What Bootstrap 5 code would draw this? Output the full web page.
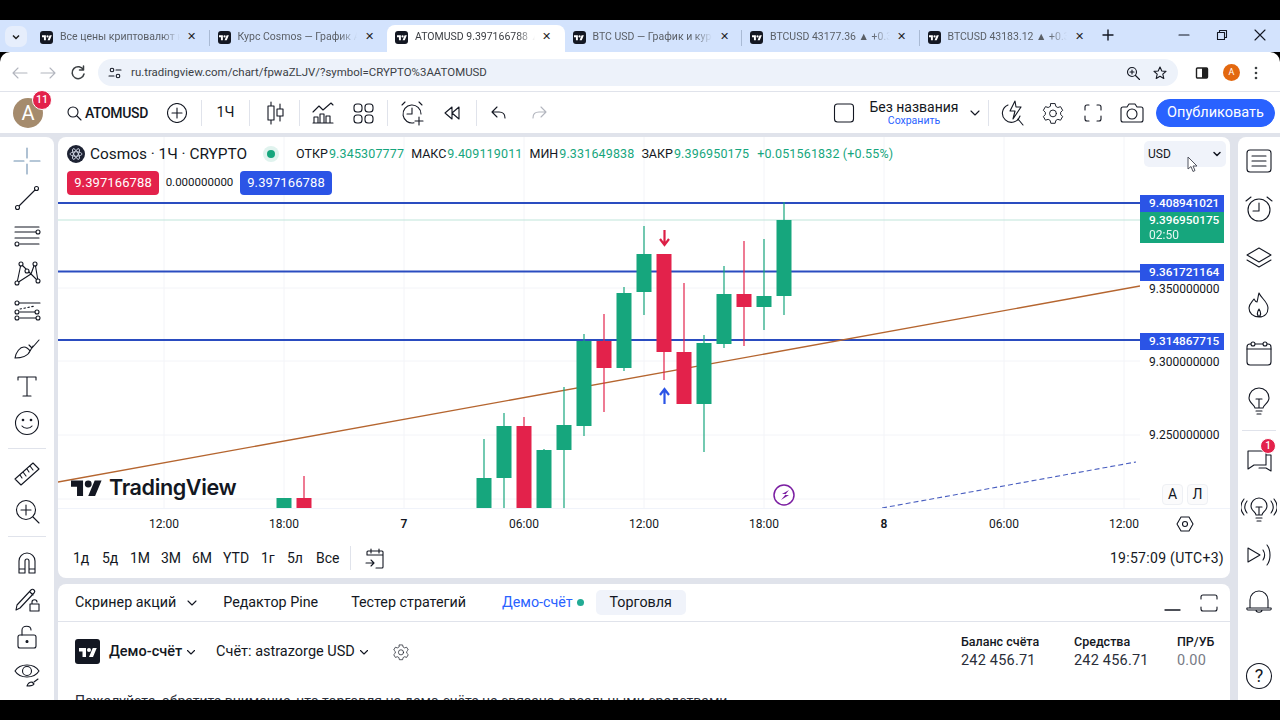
<!DOCTYPE html>
<html lang="ru">
<head>
<meta charset="UTF-8">
<title>ATOMUSD</title>
<link href="https://cdn.jsdelivr.net/npm/bootstrap@5.3.0/dist/css/bootstrap.min.css" rel="stylesheet">
<style>
html,body{height:720px;overflow:hidden}
body{background:#000;font-family:Roboto,"Liberation Sans",sans-serif;color:#131722;font-size:14px}
svg{display:block;flex:none}
.ic{fill:none;stroke:#131722;stroke-width:1.1;stroke-linecap:round;stroke-linejoin:round}
.ic-gray{stroke:#b2b5be}
.frame-top{height:20px}
.frame-bottom{height:20px;background:#000}

/* browser tabs */
.tabstrip{height:32px;background:#d3e3fd;padding-left:5px}
.tab-menu{width:22px;height:21px;margin:6px 5px 0 0;border-radius:7px;background:#e6eefc}
.br-tab{width:177.5px;height:27px;margin-top:5px;padding:0 8px 3px 8px;font-size:10.5px;color:#5a5f66;position:relative}
.br-tab.active{background:#fff;border-radius:8px 8px 0 0;color:#3a3d42}
.br-tab + .br-tab:not(.active):not(.after-active)::before{content:"";position:absolute;left:-1px;top:5px;height:16px;width:1px;background:#a9bad4}
.favicon{width:13px;height:13px;border-radius:3px;background:#131722;margin-right:7px}
.tab-title{flex:1;white-space:nowrap;overflow:hidden;-webkit-mask-image:linear-gradient(90deg,#000 85%,transparent);mask-image:linear-gradient(90deg,#000 85%,transparent)}
.tab-x{width:20px;text-align:center;font-size:10.5px;color:#1f1f1f;margin-left:2px}
.new-tab{margin:0 0 3px 4px}
.win-btns{gap:24px;padding:0 13px 3px 0}

/* address bar */
.addressbar{height:40px;background:#fff;border-bottom:1px solid #e0e3eb;border-radius:10px 10px 0 0;padding:2px 12px 0 10px}
.nav-fwd{margin-right:10px}
.addr-pill{width:1080px;height:27px;margin-left:10px;background:#edf2fa;border-radius:14px;padding:0 10px;font-size:11.45px;color:#3b3f46}
.addr-pill .host{margin-left:9px}
.addr-zoom{margin-right:11px}
.panel-btn{margin:0 13px 0 16px}
.chrome-avatar{width:17px;height:17px;border-radius:50%;background:#e3680f;color:#fff;font-size:9px;line-height:17px;text-align:center}

/* app */
.app{height:608px;background:#e0e3eb;display:flex;flex-direction:column}
.topbar{height:41px;background:#fff;margin-bottom:4px;padding:1px 5px 0 0}
.avatar-wrap{width:58px;padding-left:13px;position:relative}
.avatar{width:30px;height:30px;border-radius:50%;background:#a58b6d;color:#fff;font-size:20px;line-height:31px;text-align:center}
.count{position:absolute;background:#e3224b;color:#fff;border:1px solid #fff;border-radius:50%;text-align:center;font-weight:500}
.avatar-wrap .count{left:32px;top:-8px;width:20px;height:20px;font-size:10.5px;line-height:18px}
.tb-sym{width:134px;padding-left:8px;font-size:14px;font-weight:500}
.tb-sym span{margin:0 19px 0 3px;letter-spacing:-.35px}
.sep{width:1px;height:26px;background:#e0e3eb}
.sep-first{margin-left:9px}
.slot{width:40px;height:36px}
.slot-wide{width:47px;font-size:14.5px}
.slot-candle{margin:0 4.5px}
.slot-ind{margin-left:3px}
.slot-undo{margin-left:2px}
.slot-cam{width:38px}
.layout-name{width:100px;line-height:1.05;font-size:14px;margin-left:9px;text-align:center}
.layout-name small{display:block;color:#2962ff;font-size:10.5px;margin-top:1px}
.layout-chev{margin:0 7px 0 5px}
.btn-publish{--bs-btn-bg:#2962ff;--bs-btn-border-color:#2962ff;--bs-btn-padding-y:0;--bs-btn-padding-x:0;--bs-btn-font-size:14.5px;width:119px;height:28px;margin-left:5px}

.workspace{flex:1;min-height:0}
.leftbar{width:54px;background:#fff;border-radius:0 8px 0 0;padding-top:5px;margin-right:4px}
.leftbar .t{height:37.5px}
.hr-tool{width:38px;height:1px;background:#e0e3eb;margin:6px auto 6px}
.cross{stroke:#6d8fb0}
.center{width:1172px}
.rightbar{width:42px;margin-left:8px;background:#fff;border-radius:8px 0 0 0}
.rightbar .t{height:48px;position:relative}
.rightbar .t.short{height:46px}
.rightbar .hr-tool{width:34px;margin:5px auto 5px}
.rightbar .count{left:22px;top:2px;width:16px;height:16px;font-size:10px;line-height:14px}

/* chart pane */
.pane{height:441px;background:#fff;border-radius:8px;overflow:hidden;position:relative}
.plot-row{height:371px}
.plot{width:1082px;position:relative}
.legend{position:absolute;left:9px;top:8px;right:0}
.legend-title{font-size:15.4px;line-height:18px}
.cosmos{width:18px;height:18px;border-radius:50%;background:#1d2233;margin-right:5px}
.live{width:22px;height:18px;display:flex;align-items:center;justify-content:center;margin:0 14px 0 13px}
.live i{display:block;width:8px;height:8px;border-radius:50%;background:#16a67d;box-shadow:0 0 0 4px #e0f3ee}
.ohlc{font-size:12.5px;white-space:nowrap}
.ohlc b{font-weight:400;color:#16a67d;margin:0 7px 0 1px;letter-spacing:.15px}
.order-row{margin-top:7px;font-size:13px}
.order{height:24px;width:92px;color:#fff;border-radius:4px;text-align:center;line-height:24px;letter-spacing:.1px}
.order.sell{background:#e3224b}
.order.buy{background:#2b54e6}
.spread{width:81px;text-align:center;font-size:11.5px}
.logo{position:absolute;left:13px;top:338px;font-size:21.6px;font-weight:600;letter-spacing:-.4px;line-height:24px;font-family:Inter,Roboto,sans-serif}
.logo svg{margin-right:7px}
.price-axis{width:90px;position:relative;font-size:12px}
.tag{position:absolute;left:0;width:84px;height:17px;line-height:17px;padding-left:9px;color:#fff;background:#2b54e6;font-weight:500;font-size:11.8px}
.tag.last{background:#16a67d;height:31px;line-height:15px;padding-top:1px}
.tag.last small{display:block;font-size:12px;font-weight:400;opacity:.9}
.price{position:absolute;left:9px}
.currency{position:absolute;left:4px;top:4px;width:82px;height:26px;background:#f0f3fa;border-radius:5px;padding:0 4px;font-size:12px}
.cursor{position:absolute;left:47px;top:19px}
.ab{position:absolute;top:347px;width:21px;height:21px;background:#fbfbfc;border:1px solid #eef0f4;border-radius:4px;text-align:center;line-height:19px;font-size:14px}
.ab-a{left:22px}
.ab-l{left:47px}
.time-axis{height:30px;padding-left:46px;font-size:12px;border-top:1px solid #f0f3fa}
.time-axis span{width:120px;text-align:center}
.time-axis .day{font-weight:600}
.time-gear{margin-left:-9px}
.range-bar{height:40px;padding:0 6px 0 15px;font-size:14px}
.range-sep{width:1px;height:24px;background:#e0e3eb;margin:0 13px 0 11px}
.r1{width:29px}.r2{width:28px}.r3{width:31px}.r4{width:38px}.r5{width:26px}
.clock{font-size:14px;letter-spacing:.3px}

/* bottom panel */
.bottom{height:116px;margin-top:6px;background:#fff;border-radius:8px 8px 0 0;overflow:hidden}
.bottom-tabs{height:38px;padding:0 11px 0 17px;border-bottom:1px solid #e0e3eb;font-size:14.3px}
.bottom-tabs .chev{margin-left:10px}
.m-pine{margin-left:25px}
.m-tab{margin-left:33px}
.demo-link{color:#2962ff;margin-left:36px}
.dot{width:7px;height:7px;border-radius:50%;background:#22ab94;margin:0 12px 0 4px}
.trade-btn{height:25px;width:90px;background:#f0f3fa;border-radius:5px;text-align:center;line-height:25px}
.expand{margin-left:17px}
.account{padding:17px 0 0 17px;font-size:14.5px}
.account .acc-name{margin-left:20px}
.account .acc-gear{margin-left:23px}
.tv-square{width:25px;height:25px;background:#131722;border-radius:3px;margin-right:9px}
.metric{font-size:13px;line-height:18px;padding-top:11px}
.metric > div > div:first-child{font-weight:500;font-size:12.5px}
.metric .val{font-size:14.5px;letter-spacing:.2px;color:#2a2e39;margin-top:1px}
.metric .val.zero{color:#787b86}
.cut-line{padding:27px 0 0 17px;font-size:14px;white-space:nowrap;color:#2a2e39}
</style>
</head>
<body>
<svg width="0" height="0" class="position-absolute">
  <symbol id="tv" viewBox="0 0 36 24"><path fill="currentColor" d="M14 22H7V11H0V4h14zM28 22h-8l7.500-18h8z"/><circle fill="currentColor" cx="20" cy="8" r="4"/></symbol>
  <symbol id="gear" viewBox="0 0 28 28"><path d="M11.500 3h5l.8 3.300 2.300 1.300 3.200-1 2.500 4.300-2.400 2.300v2.600l2.400 2.300-2.500 4.300-3.200-1-2.300 1.300-.8 3.300h-5l-.8-3.300-2.300-1.300-3.200 1L2.700 18.100l2.400-2.300v-2.600L2.700 10.900l2.500-4.300 3.200 1 2.300-1.300z"/><circle cx="14" cy="14.500" r="4"/></symbol>
</svg>

<div class="frame-top"></div>

<div class="tabstrip d-flex">
  <div class="tab-menu d-flex align-items-center justify-content-center"><svg width="10" height="10" viewBox="0 0 10 10"><path d="M2 3.500l3 3 3-3" fill="none" stroke="#1f1f1f" stroke-width="1.500"/></svg></div>
  <div class="br-tab d-flex align-items-center"><div class="favicon d-flex align-items-center justify-content-center text-white"><svg width="10" height="7"><use href="#tv"/></svg></div><div class="tab-title">Все цены криптовалют на</div><div class="tab-x">✕</div></div>
  <div class="br-tab d-flex align-items-center"><div class="favicon d-flex align-items-center justify-content-center text-white"><svg width="10" height="7"><use href="#tv"/></svg></div><div class="tab-title">Курс Cosmos — График А</div><div class="tab-x">✕</div></div>
  <div class="br-tab active d-flex align-items-center"><div class="favicon d-flex align-items-center justify-content-center text-white"><svg width="10" height="7"><use href="#tv"/></svg></div><div class="tab-title">ATOMUSD 9.397166788 ▲</div><div class="tab-x">✕</div></div>
  <div class="br-tab after-active d-flex align-items-center"><div class="favicon d-flex align-items-center justify-content-center text-white"><svg width="10" height="7"><use href="#tv"/></svg></div><div class="tab-title">BTC USD — График и курс</div><div class="tab-x">✕</div></div>
  <div class="br-tab d-flex align-items-center"><div class="favicon d-flex align-items-center justify-content-center text-white"><svg width="10" height="7"><use href="#tv"/></svg></div><div class="tab-title">BTCUSD 43177.36 ▲ +0.31</div><div class="tab-x">✕</div></div>
  <div class="br-tab d-flex align-items-center"><div class="favicon d-flex align-items-center justify-content-center text-white"><svg width="10" height="7"><use href="#tv"/></svg></div><div class="tab-title">BTCUSD 43183.12 ▲ +0.32</div><div class="tab-x">✕</div></div>
  <div class="new-tab d-flex align-items-center"><svg width="14" height="14" class="ic"><path d="M7 2v10M2 7h10" stroke-width="1.400"/></svg></div>
  <div class="win-btns d-flex align-items-center ms-auto">
    <svg width="14" height="14" class="ic"><path d="M2 7h10"/></svg>
    <svg width="14" height="14" class="ic"><path d="M2.500 4.500h7v7h-7zM4.500 4.500v-2h7v7h-2"/></svg>
    <svg width="14" height="14" class="ic"><path d="M2 2l10 10M12 2L2 12"/></svg>
  </div>
</div>

<div class="addressbar d-flex align-items-center">
  <svg width="20" height="20" class="ic ic-gray me-2"><path d="M3 10h14M8 5l-5 5 5 5"/></svg>
  <svg width="20" height="20" class="ic ic-gray nav-fwd"><path d="M3 10h14M12 5l5 5-5 5"/></svg>
  <svg width="20" height="20" class="ic"><path d="M15.500 7a6 6 0 1 0 .5 4M15.500 3v4h-4" stroke-width="1.500" stroke="#3c4043"/></svg>
  <div class="addr-pill d-flex align-items-center">
    <svg width="14" height="14" class="ic"><circle cx="4" cy="4" r="1.800"/><path d="M8 4h5M1 10h5"/><circle cx="10" cy="10" r="1.800"/></svg>
    <span class="host">ru.tradingview.com/chart/fpwaZLJV/?symbol=CRYPTO%3AATOMUSD</span>
    <svg width="16" height="16" class="ic addr-zoom ms-auto"><circle cx="7" cy="7" r="4.500"/><path d="M10.500 10.500l4 4M5 7h4M7 5v4"/></svg>
    <svg width="16" height="16" class="ic"><path d="M8 2l1.800 4 4.200.4-3.200 2.800 1 4.300L8 11.200l-3.800 2.300 1-4.300L2 6.400 6.200 6z"/></svg>
  </div>
  <svg width="16" height="16" class="panel-btn" viewBox="0 0 16 16"><rect x="2.500" y="3" width="11" height="10" rx="1" fill="none" stroke="#1f1f1f" stroke-width="1.400"/><rect x="8" y="3" width="5.500" height="10" fill="#1f1f1f"/></svg>
  <div class="chrome-avatar">A</div>
  <svg width="16" height="16" class="ms-2"><circle cx="8" cy="3" r="1.300" fill="#3c4043"/><circle cx="8" cy="8" r="1.300" fill="#3c4043"/><circle cx="8" cy="13" r="1.300" fill="#3c4043"/></svg>
</div>

<div class="app">
  <div class="topbar d-flex align-items-center">
    <div class="avatar-wrap"><div class="avatar">A</div><div class="count">11</div></div>
    <div class="tb-sym d-flex align-items-center">
      <svg width="16" height="16" class="ic"><circle cx="7" cy="7" r="5"/><path d="M11 11l4 4"/></svg>
      <span>ATOMUSD</span>
      <svg width="20" height="20" class="ic"><circle cx="10" cy="10" r="9.500"/><path d="M10 5v10M5 10h10"/></svg>
    </div>
    <div class="sep sep-first"></div>
    <div class="slot-wide text-center">1Ч</div>
    <div class="sep"></div>
    <div class="slot slot-candle d-flex align-items-center justify-content-center"><svg width="22" height="24" class="ic"><path d="M7 1v4M7 19v4M16 3v5M16 15v5M4 5h6v14H4zM13 8h6v7h-6z"/></svg></div>
    <div class="sep"></div>
    <div class="slot slot-ind d-flex align-items-center justify-content-center"><svg width="24" height="24" class="ic"><path d="M2 11l6-6 4 4 8-7 2 2M3 22v-6h4v6M9 22v-9h4v9M15 22v-7h4v7M2 22h20"/></svg></div>
    <div class="slot d-flex align-items-center justify-content-center"><svg width="22" height="22" class="ic"><rect x="2" y="2" width="8" height="8" rx="3"/><rect x="13" y="2" width="8" height="8" rx="3"/><rect x="2" y="13" width="8" height="8" rx="3"/><rect x="13" y="13" width="8" height="8" rx="3"/></svg></div>
    <div class="sep ms-1"></div>
    <div class="slot d-flex align-items-center justify-content-center ms-1"><svg width="26" height="26" class="ic"><path d="M22 14a9 9 0 1 0-7 8.800M13 8v6H8M3 5l3-3M23 5l-3-3M20 17v8M16 21h8"/></svg></div>
    <div class="slot d-flex align-items-center justify-content-center"><svg width="20" height="20" class="ic"><path d="M10 4l-7 6 7 6zM17 4l-7 6 7 6z"/></svg></div>
    <div class="sep ms-1"></div>
    <div class="slot slot-undo d-flex align-items-center justify-content-center"><svg width="20" height="20" class="ic"><path d="M8 4L3 9l5 5M3 9h7c4 0 6 2 6 6"/></svg></div>
    <div class="slot d-flex align-items-center justify-content-center"><svg width="20" height="20" class="ic ic-gray"><path d="M12 4l5 5-5 5M17 9h-7c-4 0-6 2-6 6"/></svg></div>

    <div class="ms-auto d-flex align-items-center">
      <svg width="22" height="22" class="ic"><rect x="1.500" y="2" width="19" height="18" rx="3"/></svg>
      <div class="layout-name">Без названия<small>Сохранить</small></div>
      <svg width="12" height="12" class="ic layout-chev"><path d="M2 4l4 4 4-4"/></svg>
      <div class="sep"></div>
      <div class="slot d-flex align-items-center justify-content-center ms-1"><svg width="24" height="26" class="ic"><path d="M7 5a9 9 0 1 0 12 11M14 1l-5 10h5l-2 8 8-12h-5zM17 19l5 6"/></svg></div>
      <div class="slot d-flex align-items-center justify-content-center"><svg width="24" height="24" viewBox="0 0 28 28" class="ic"><use href="#gear"/></svg></div>
      <div class="slot d-flex align-items-center justify-content-center"><svg width="20" height="20" class="ic"><path d="M2 7V4a2 2 0 0 1 2-2h2M14 2h2a2 2 0 0 1 2 2v3M18 13v3a2 2 0 0 1-2 2h-2M6 18H4a2 2 0 0 1-2-2v-3"/></svg></div>
      <div class="slot slot-cam d-flex align-items-center justify-content-center"><svg width="24" height="22" class="ic"><path d="M3 5h4l2-3h6l2 3h4a2 2 0 0 1 2 2v11a2 2 0 0 1-2 2H3a2 2 0 0 1-2-2V7a2 2 0 0 1 2-2z"/><circle cx="12" cy="12" r="5"/></svg></div>
      <button class="btn btn-primary btn-publish rounded-pill">Опубликовать</button>
    </div>
  </div>

  <div class="workspace d-flex">
    <div class="leftbar">
      <div class="t d-flex align-items-center justify-content-center"><svg width="28" height="28" class="ic cross"><path d="M14 1v10M14 17v10M1 14h10M17 14h10"/></svg></div>
      <div class="t d-flex align-items-center justify-content-center"><svg width="28" height="28" class="ic"><path d="M6 22L22 6"/><circle cx="4.500" cy="23.500" r="2" fill="#fff"/><circle cx="23.500" cy="4.500" r="2" fill="#fff"/></svg></div>
      <div class="t d-flex align-items-center justify-content-center"><svg width="28" height="28" class="ic"><path d="M2 5h24M2 10h21M2 16h24M7 22h19"/><circle cx="25" cy="10" r="2" fill="#fff"/><circle cx="4" cy="22" r="2" fill="#fff"/></svg></div>
      <div class="t d-flex align-items-center justify-content-center"><svg width="28" height="28" class="ic"><path d="M4 24L8 5l10 10L22 4l3 18-7-7-10-10zM4 24l14-9"/><circle cx="4" cy="24" r="2" fill="#fff"/><circle cx="8" cy="5" r="2" fill="#fff"/><circle cx="14" cy="12" r="2" fill="#fff"/><circle cx="22" cy="5" r="2" fill="#fff"/><circle cx="25" cy="22" r="2" fill="#fff"/></svg></div>
      <div class="t d-flex align-items-center justify-content-center"><svg width="28" height="28" class="ic"><path d="M6 6h21M7 15h15M7 21h16"/><path d="M7 12l15-3" stroke-dasharray="1.500 2.500"/><circle cx="4" cy="6" r="2" fill="#fff"/><circle cx="4" cy="15" r="2" fill="#fff"/><circle cx="4" cy="21" r="2" fill="#fff"/><circle cx="24" cy="15" r="2" fill="#fff"/><circle cx="25" cy="21" r="2" fill="#fff"/></svg></div>
      <div class="t d-flex align-items-center justify-content-center"><svg width="28" height="28" class="ic"><path d="M2 24c1-6 5-11 9-11 2 0 5 2 6 4-2 5-9 7-15 7zM17 17l3-5M16 11l3 3 7-8"/></svg></div>
      <div class="t d-flex align-items-center justify-content-center"><svg width="28" height="28" class="ic"><path d="M5 8V5h18v3M14 5v19M10 24h8"/></svg></div>
      <div class="t d-flex align-items-center justify-content-center"><svg width="28" height="28" class="ic"><circle cx="14" cy="14" r="11.500"/><path d="M9 17c2 3 8 3 10 0"/><circle cx="10" cy="11" r=".8" fill="#131722"/><circle cx="18" cy="11" r=".8" fill="#131722"/></svg></div>
      <div class="hr-tool"></div>
      <div class="t d-flex align-items-center justify-content-center"><svg width="28" height="28" class="ic"><path d="M2 19L20 3l6 6L8 25zM7 15l2 3M10 12l3 4M14 9l2 3M17 6l3 4"/></svg></div>
      <div class="t d-flex align-items-center justify-content-center"><svg width="28" height="28" class="ic"><circle cx="13" cy="13" r="9.500"/><path d="M13 8v10M8 13h10M20 20l6 6"/></svg></div>
      <div class="hr-tool"></div>
      <div class="t d-flex align-items-center justify-content-center"><svg width="28" height="28" class="ic"><path d="M6 25V13a8 8 0 0 1 16 0v12h-6V13a2 2 0 0 0-4 0v12zM6 21h6M16 21h6"/></svg></div>
      <div class="t d-flex align-items-center justify-content-center"><svg width="28" height="28" class="ic"><path d="M3 25l1-5L18 5c2-2 5 1 3 3L7 23zM17 7l3 3M17 19h9v7h-9zM19 19v-2c0-3 5-3 5 0"/></svg></div>
      <div class="t d-flex align-items-center justify-content-center"><svg width="28" height="28" class="ic"><rect x="5" y="12" width="18" height="13" rx="2"/><path d="M9 12V7c0-5 9-5 9 0"/><circle cx="14" cy="18.500" r="1" fill="#131722"/></svg></div>
      <div class="t d-flex align-items-center justify-content-center"><svg width="28" height="28" class="ic"><path d="M2 11c5-8 19-8 24 0-5 8-19 8-24 0z"/><circle cx="14" cy="11" r="4.500"/><path d="M14 26c1-3 3-4 5-4l2 2c-1 2-4 2-7 2zM21 22l4-3"/></svg></div>
    </div>

    <div class="center">
      <div class="pane">
        <div class="plot-row d-flex">
          <div class="plot">
            <svg id="chart" width="1082" height="371" viewBox="58 137 1082 371"></svg>
            <div class="legend">
              <div class="d-flex align-items-center">
                <div class="cosmos d-flex align-items-center justify-content-center"><svg width="14" height="14" viewBox="0 0 14 14" fill="none" stroke="#dfe6f5" stroke-width=".8"><ellipse cx="7" cy="7" rx="6" ry="2.200"/><ellipse cx="7" cy="7" rx="6" ry="2.200" transform="rotate(60 7 7)"/><ellipse cx="7" cy="7" rx="6" ry="2.200" transform="rotate(120 7 7)"/></svg></div>
                <div class="legend-title">Cosmos · 1Ч · CRYPTO</div>
                <div class="live"><i></i></div>
                <div class="ohlc">ОТКР<b>9.345307777</b>МАКС<b>9.409119011</b>МИН<b>9.331649838</b>ЗАКР<b>9.396950175</b><b>+0.051561832 (+0.55%)</b></div>
              </div>
              <div class="order-row d-flex align-items-center">
                <div class="order sell">9.397166788</div>
                <div class="spread">0.000000000</div>
                <div class="order buy">9.397166788</div>
              </div>
            </div>
            <div class="logo d-flex align-items-center"><svg width="31" height="21"><use href="#tv"/></svg>TradingView</div>
          </div>
          <div class="price-axis" id="axis">
            <div class="currency d-flex align-items-center justify-content-between">USD<svg width="10" height="10" class="ic"><path d="M2 3.500l3 3 3-3" stroke-width="1.500"/></svg></div>
            <svg class="cursor" width="12" height="18" viewBox="0 0 12 18"><path d="M1 1v12l3-2.500 2 5 2-1-2-4.500h4z" fill="#fff" stroke="#50535e"/></svg>
            <div class="ab ab-a">А</div>
            <div class="ab ab-l">Л</div>
          </div>
        </div>
        <div class="time-axis d-flex align-items-center">
          <span>12:00</span><span>18:00</span><span class="day">7</span><span>06:00</span><span>12:00</span><span>18:00</span><span class="day">8</span><span>06:00</span><span>12:00</span>
          <svg width="20" height="20" class="ic time-gear" viewBox="0 0 20 20"><path d="M6 3h8l4 7-4 7H6l-4-7z"/><circle cx="10" cy="10" r="2.500"/></svg>
        </div>
        <div class="range-bar d-flex align-items-center">
          <span class="r1">1д</span><span class="r2">5д</span><span class="r3">1М</span><span class="r3">3М</span><span class="r3">6М</span><span class="r4">YTD</span><span class="r5">1г</span><span class="r1">5л</span><span>Все</span>
          <div class="range-sep"></div>
          <svg width="22" height="22" class="ic"><path d="M3 8V5a1 1 0 0 1 1-1h14a1 1 0 0 1 1 1v15a1 1 0 0 1-1 1h-6M3 8h16M7 2v4M15 2v4M2 16h8M7 13l3 3-3 3"/></svg>
          <div class="clock ms-auto">19:57:09 (UTC+3)</div>
        </div>
      </div>

      <div class="bottom">
        <div class="bottom-tabs d-flex align-items-center">
          <span>Скринер акций</span>
          <svg width="12" height="12" class="ic chev"><path d="M2 4l4 4 4-4"/></svg>
          <span class="m-pine">Редактор Pine</span>
          <span class="m-tab">Тестер стратегий</span>
          <span class="demo-link">Демо-счёт</span><i class="dot"></i>
          <div class="trade-btn">Торговля</div>
          <svg width="20" height="20" class="ic ms-auto"><path d="M3 17h15" stroke-width="1.300"/></svg>
          <svg width="20" height="20" class="ic expand"><path d="M2 6V4a2 2 0 0 1 2-2h12a2 2 0 0 1 2 2v2M18 14v2a2 2 0 0 1-2 2H4a2 2 0 0 1-2-2v-2"/></svg>
        </div>
        <div class="d-flex">
          <div class="flex-grow-1">
            <div class="account d-flex align-items-center">
              <div class="tv-square d-flex align-items-center justify-content-center text-white"><svg width="18" height="12"><use href="#tv"/></svg></div>
              <span class="fw-medium">Демо-счёт</span>
              <svg width="10" height="10" class="ic ms-1"><path d="M1.500 3.500l3.500 3.500 3.500-3.500"/></svg>
              <span class="acc-name">Счёт: astrazorge USD</span>
              <svg width="10" height="10" class="ic ms-1"><path d="M1.500 3.500l3.500 3.500 3.500-3.500"/></svg>
              <svg width="18" height="18" viewBox="0 0 28 28" class="ic acc-gear"><use href="#gear"/></svg>
            </div>
            <div class="cut-line">Пожалуйста, обратите внимание, что торговля на демо-счёте не связана с реальными средствами</div>
          </div>
          <div class="d-flex metric">
            <div style="width:113px"><div>Баланс счёта</div><div class="val">242 456.71</div></div>
            <div style="width:103px"><div>Средства</div><div class="val">242 456.71</div></div>
            <div style="width:53px"><div>ПР/УБ</div><div class="val zero">0.00</div></div>
          </div>
        </div>
      </div>
    </div>

    <div class="rightbar d-flex flex-column">
      <div class="t d-flex align-items-center justify-content-center"><svg width="28" height="28" class="ic"><rect x="2" y="3" width="24" height="22" rx="3"/><path d="M7 9h14M7 14h14M7 19h14"/></svg></div>
      <div class="t d-flex align-items-center justify-content-center"><svg width="28" height="28" class="ic"><circle cx="14" cy="15" r="11"/><path d="M14 8v8H8M1 6l5-4M27 6l-5-4"/></svg></div>
      <div class="t d-flex align-items-center justify-content-center"><svg width="28" height="28" class="ic"><path d="M14 5l12 7-12 7-12-7zM2 17l12 7 12-7"/></svg></div>
      <div class="t d-flex align-items-center justify-content-center"><svg width="28" height="28" class="ic"><path d="M14 26c-6 0-10-4-10-9 0-4 3-6 5-9 1 2 2 3 3 3 1-3 1-6 2-9 2 5 9 9 9 15 0 5-3 9-9 9zM14 26c-2-2-2-5 0-8 2 3 2 6 0 8z"/></svg></div>
      <div class="t d-flex align-items-center justify-content-center"><svg width="28" height="28" class="ic"><rect x="2" y="5" width="24" height="21" rx="3"/><path d="M2 10h24"/><circle cx="8" cy="5" r="2" fill="#fff"/><circle cx="20" cy="5" r="2" fill="#fff"/></svg></div>
      <div class="t d-flex align-items-center justify-content-center"><svg width="28" height="28" class="ic"><path d="M10 21c0-3-6-5-6-10a10 10 0 0 1 20 0c0 5-6 7-6 10zM11 24h6M12 27h4M14 21v-9M11 12h6"/></svg></div>
      <div class="hr-tool"></div>
      <div class="t d-flex align-items-center justify-content-center"><svg width="28" height="28" class="ic"><path d="M3 5h18v14H9l-6 4zM21 9h5v16l-5-3h-7"/></svg><div class="count">1</div></div>
      <div class="t d-flex align-items-center justify-content-center"><svg width="36" height="28" class="ic"><path d="M15 21c0-3-5-4-5-9a8 8 0 0 1 16 0c0 5-5 6-5 9zM15 24h6M16 27h4M18 21v-8M15 13h6M6 7c-3 4-3 8 0 12M3 5c-4 5-4 11 0 16M30 7c3 4 3 8 0 12M33 5c4 5 4 11 0 16"/></svg></div>
      <div class="t short d-flex align-items-center justify-content-center"><svg width="28" height="28" class="ic"><path d="M3 7l12 7-12 7zM18 9c2 3 2 7 0 10M22 4c4 5 4 15 0 20"/></svg></div>
      <div class="t short d-flex align-items-center justify-content-center"><svg width="28" height="28" class="ic"><path d="M5 21V13a9 9 0 0 1 18 0v8M2 21h24M2 21c-.5 1 0 2 1 2h22c1 0 1.500-1 1-2M11 23c0 3 6 3 6 0"/></svg></div>
      <div class="t d-flex align-items-center justify-content-center mt-auto"><svg width="28" height="28" class="ic"><circle cx="14" cy="14" r="12.500"/><text x="14" y="20" text-anchor="middle" font-size="18" fill="#131722" stroke="none" font-family="Roboto">?</text></svg></div>
    </div>
  </div>
</div>

<div class="frame-bottom"></div>

<script>
// candles: x, wick top, wick bottom, body top, body bottom, up?
var candles = [
  [284,498,508,498,508,1],[304,476,508,498,508,0],
  [484,439,508,478,508,1],[504,413,508,426,478,1],[524,417,508,426,508,0],[544,449,508,450,508,1],
  [564,387,508,425,450,1],[584,334,436,341,426,1],[604,314,412,341,368,0],[624,287,371,293,368,1],
  [644,226,315,254,292,1],[664,254,380,254,352,0],[684,283,404,352,404,0],[704,335,452,343,404,1],
  [724,266,348,294,344,1],[744,241,346,294,307,0],[764,239,330,296,307,1],[784,202,315,220,296,1]
];
var s = '';
[164,284,404,524,644,764,884,1004,1124].forEach(function (x) {
  s += '<path d="M' + x + ' 137V508" stroke="#f3f4f8"/>';
});
[220,288,361,435,499].forEach(function (y) {
  s += '<path d="M58 ' + y + 'H1140" stroke="' + (y === 220 ? '#bfe5da' : '#f3f4f8') + '"/>';
});
[203,271.5,340].forEach(function (y) {
  s += '<path d="M58 ' + y + 'H1140" stroke="#2a4cc0" stroke-width="2"/>';
});
s += '<path d="M58 482L1140 286" stroke="#b5652f" stroke-width="1.400"/>';
s += '<path d="M882 508L1136 462" stroke="#4a5fc0" stroke-width="1.100" stroke-dasharray="5 3"/>';
candles.forEach(function (c) {
  var col = c[5] ? '#16a67d' : '#e3224b';
  s += '<path d="M' + c[0] + ' ' + c[1] + 'V' + c[2] + '" stroke="' + col + '" stroke-width="1.200"/>';
  s += '<rect x="' + (c[0] - 7.5) + '" y="' + c[3] + '" width="15" height="' + (c[4] - c[3]) + '" fill="' + col + '"/>';
});
s += '<path d="M664.500 230V244M660 239l4.500 6 4.500-6" fill="none" stroke="#dc1f46" stroke-width="2.200"/>';
s += '<path d="M664.500 404V390M660 395l4.500-6 4.500 6" fill="none" stroke="#2b54e6" stroke-width="2.200"/>';
s += '<circle cx="784" cy="495" r="10" fill="#fff" stroke="#7b1fa2" stroke-width="1.500"/><path d="M789 490l-7 4h4l-5 6 8-5h-4z" fill="#7b1fa2"/>';
document.getElementById('chart').innerHTML = s;

// price scale, y is the screen position of the label centre
var axis = document.getElementById('axis');
[[203,'9.408941021'],[272,'9.361721164'],[341,'9.314867715']].forEach(function (t) {
  axis.insertAdjacentHTML('beforeend', '<div class="tag" style="top:' + (t[0] - 145.5) + 'px">' + t[1] + '</div>');
});
axis.insertAdjacentHTML('beforeend', '<div class="tag last" style="top:75px">9.396950175<small>02:50</small></div>');
[[288.5,'9.350000000'],[361.5,'9.300000000'],[434.5,'9.250000000']].forEach(function (t) {
  axis.insertAdjacentHTML('beforeend', '<div class="price" style="top:' + (t[0] - 146) + 'px">' + t[1] + '</div>');
});
</script>
<script src="https://cdn.jsdelivr.net/npm/bootstrap@5.3.0/dist/js/bootstrap.bundle.min.js"></script>
</body>
</html>
